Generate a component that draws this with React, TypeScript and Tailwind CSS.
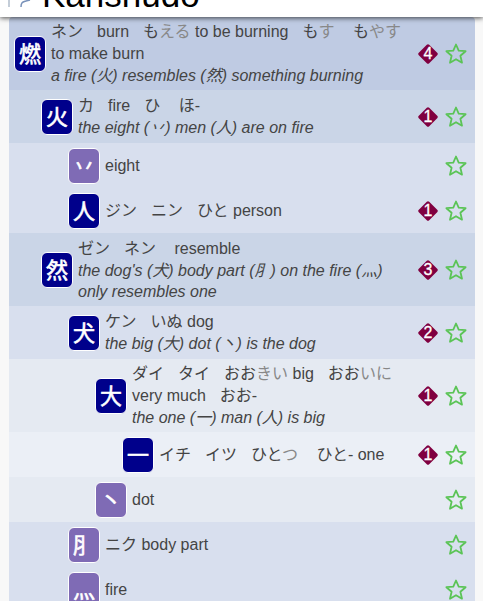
import type { ReactNode } from "react";

type Row = {
  kanji: string;
  depth: number;
  lines: 1 | 2 | 3;
  component?: boolean;
  level?: number;
  body: ReactNode;
};

const depthStyle = [
  "bg-[#bfcbe3] pl-[5px]",
  "bg-[#cad5e7] pl-[32px]",
  "bg-[#d8dfee] pl-[59px]",
  "bg-[#e5eaf2] pl-[86px]",
  "bg-[#ebeff6] pl-[113px]",
];

const rowHeight = {
  1: "min-h-[45px]",
  2: "min-h-[53px]",
  3: "min-h-[73px]",
};

const Gap = () => <span className="inline-block w-[14px]" />;
const Kana = ({ children }: { children: ReactNode }) => (
  <span className="text-[#888]">{children}</span>
);
const Readings = ({ children }: { children: ReactNode }) => (
  <div className="leading-[22px]">{children}</div>
);
const Hint = ({ children }: { children: ReactNode }) => <div className="italic">{children}</div>;

const rows: Row[] = [
  {
    kanji: "燃",
    depth: 0,
    lines: 3,
    level: 4,
    body: (
      <>
        <Readings>
          ネン<Gap />burn<Gap />も<Kana>える</Kana> to be burning<Gap />も<Kana>す</Kana> <Gap />も<Kana>やす</Kana>
          <br />
          to make burn
        </Readings>
        <Hint>a fire (火) resembles (然) something burning</Hint>
      </>
    ),
  },
  {
    kanji: "火",
    depth: 1,
    lines: 2,
    level: 1,
    body: (
      <>
        <Readings>
          カ<Gap />fire<Gap />ひ <Gap />ほ-
        </Readings>
        <Hint>the eight (丷) men (人) are on fire</Hint>
      </>
    ),
  },
  { kanji: "丷", depth: 2, lines: 1, component: true, body: <Readings>eight</Readings> },
  {
    kanji: "人",
    depth: 2,
    lines: 1,
    level: 1,
    body: (
      <Readings>
        ジン<Gap />ニン<Gap />ひと person
      </Readings>
    ),
  },
  {
    kanji: "然",
    depth: 1,
    lines: 3,
    level: 3,
    body: (
      <>
        <Readings>
          ゼン<Gap />ネン <Gap />resemble
        </Readings>
        <Hint>
          the dog's (犬) body part (⺼) on the fire (灬)
          <br />
          only resembles one
        </Hint>
      </>
    ),
  },
  {
    kanji: "犬",
    depth: 2,
    lines: 2,
    level: 2,
    body: (
      <>
        <Readings>
          ケン<Gap />いぬ dog
        </Readings>
        <Hint>the big (大) dot (丶) is the dog</Hint>
      </>
    ),
  },
  {
    kanji: "大",
    depth: 3,
    lines: 3,
    level: 1,
    body: (
      <>
        <Readings>
          ダイ<Gap />タイ<Gap />おお<Kana>きい</Kana> big<Gap />おお<Kana>いに</Kana>
          <br />
          very much<Gap />おお-
        </Readings>
        <Hint>the one (一) man (人) is big</Hint>
      </>
    ),
  },
  {
    kanji: "一",
    depth: 4,
    lines: 1,
    level: 1,
    body: (
      <Readings>
        イチ<Gap />イツ<Gap />ひと<Kana>つ</Kana> <Gap />ひと- one
      </Readings>
    ),
  },
  { kanji: "丶", depth: 3, lines: 1, component: true, body: <Readings>dot</Readings> },
  { kanji: "⺼", depth: 2, lines: 1, component: true, body: <Readings>ニク body part</Readings> },
  { kanji: "灬", depth: 2, lines: 1, component: true, body: <Readings>fire</Readings> },
];

function Level({ value }: { value: number }) {
  return (
    <span className="relative flex size-5 shrink-0 items-center justify-center">
      <svg viewBox="0 0 20 20" className="absolute inset-0 size-5" aria-hidden="true">
        <path d="M10 2 18 10 10 18 2 10Z" fill="#800040" stroke="#800040" strokeWidth="3.4" strokeLinejoin="round" />
      </svg>
      <span className="relative text-[16px] leading-5 text-white [-webkit-text-stroke:0.3px_white]">{value}</span>
    </span>
  );
}

function Star() {
  return (
    <button type="button" aria-label="Add to favorites" className="shrink-0">
      <svg viewBox="0 0 22 22" className="block size-[22px]" aria-hidden="true">
        <path
          d="M11 1.5 13.7 7.6 20.6 8.2 15.4 12.7 17 19.7 11 16.2 5 19.7 6.6 12.7 1.4 8.2 8.3 7.6Z"
          fill="none"
          stroke="#5bc456"
          strokeWidth="1.8"
          strokeLinejoin="round"
        />
      </svg>
    </button>
  );
}

export default function App() {
  return (
    <div className="h-screen overflow-hidden bg-[#f8f8f8] font-['Liberation_Sans','Noto_Sans_CJK_JP',sans-serif] text-[16px] leading-[21px] text-[#444]">
      <header className="relative z-10 h-[17px] bg-white shadow-[0_1px_5px_rgba(0,0,0,0.7)]">
        <div className="flex h-full items-end gap-[10px] overflow-hidden pl-2">
          <svg viewBox="0 0 24 17" className="h-[17px] w-6 shrink-0" fill="none" aria-hidden="true">
            <path d="M1 0V7" stroke="#b0bccb" strokeWidth="1.5" />
            <path d="M13 7C13 2 15 2 18 1L22 0" stroke="#7992ba" strokeWidth="1.5" />
          </svg>
          <span className="pb-[2px] text-[35px] leading-10 text-black">Kanshudo</span>
        </div>
      </header>
      <main className="px-2">
        <ul className="ml-px overflow-hidden rounded-t">
          {rows.map((row) => (
            <li
              key={row.kanji}
              className={`flex items-center gap-[5px] pr-2 ${rowHeight[row.lines]} ${depthStyle[row.depth]}`}
            >
              <a
                href={`#${row.kanji}`}
                lang="ja"
                className={`flex h-9 w-8 shrink-0 items-center justify-center overflow-hidden rounded-md border border-white pt-[2px] text-[22px] leading-8 text-white [-webkit-text-stroke:0.6px_white] ${
                  row.component ? "bg-[#7f6bb5]" : "bg-[#00008b]"
                }`}
              >
                {row.kanji}
              </a>
              <div lang="ja" className="min-w-0 flex-1 whitespace-nowrap">
                {row.body}
              </div>
              <div className="flex items-center gap-[7px]">
                {row.level && <Level value={row.level} />}
                <Star />
              </div>
            </li>
          ))}
        </ul>
      </main>
    </div>
  );
}
